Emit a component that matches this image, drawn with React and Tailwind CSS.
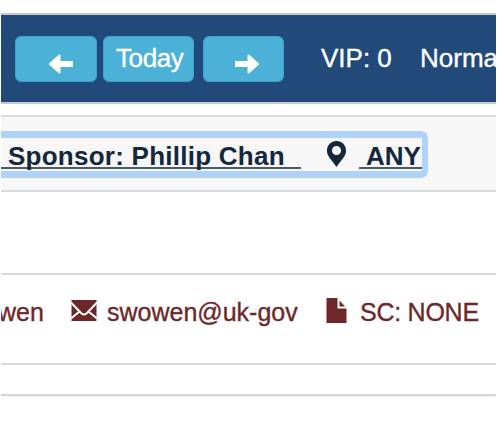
function Arrow({ flip }) {
  return (
    <svg width="26" height="20" viewBox="0 0 26 20" fill="white" className={flip ? "-scale-x-100" : ""}>
      <path d="M0.5 10 L11 0.5 L12.5 1 V7 H25 V13 H12.5 V19 L11 19.5 Z" />
    </svg>
  );
}

function Header() {
  return (
    <div className="ml-px mr-px h-[91px] border-t-2 border-b-2 border-[#c7c8c9] bg-[#214a7b]">
      <div className="flex h-[87px] items-start overflow-hidden pl-[14px] pt-[21px] text-[26px] leading-[46px] text-white [-webkit-text-stroke:0.35px_white]">
        <div className="h-[46px] w-[82px] shrink-0 rounded-[6px] border border-[#3fa0c8] bg-[#4cb1d7] pl-[32px] pt-[17px]">
          <Arrow />
        </div>
        <div className="ml-[6px] h-[46px] w-[91px] shrink-0 rounded-[6px] border border-[#3fa0c8] bg-[#4cb1d7] pl-[12px] leading-[43px] tracking-[-0.4px]">
          Today
        </div>
        <div className="ml-[9px] h-[46px] w-[81px] shrink-0 rounded-[6px] border border-[#3fa0c8] bg-[#4cb1d7] pl-[30px] pt-[17px]">
          <Arrow flip />
        </div>
        <span className="ml-[37px] w-[99px] shrink-0 whitespace-nowrap leading-[44px]">VIP: 0</span>
        <span className="shrink-0 leading-[44px]">Norma</span>
      </div>
    </div>
  );
}

function Sponsor() {
  return (
    <div className="mx-px mt-[11px] h-[77px] border-y-2 border-[#d9dada] bg-[#f7f7f7] pt-[14px]">
      <div className="flex h-[47px] w-[427px] items-start rounded-r-[7px] border-y-[7px] border-r-[6px] border-[#b0d2fa] text-[26px] font-bold leading-[36px] text-[#14273b]">
        <span className="h-[31px] w-[284px] shrink-0 whitespace-nowrap border-b-2 border-[#465b6e] pl-[7px] tracking-[0.25px]">
          Sponsor: Phillip Chan
        </span>
        <span className="h-[31px] w-[16px] shrink-0 border-b-2 border-[#465b6e]" />
        <svg className="ml-[25px] mt-[2px] shrink-0" width="21" height="28" viewBox="0 0 22 28">
          <path fillRule="evenodd" fill="#14273b" d="M11 0.5 C5.2 0.5 1 5 1 10.5 C1 16 5.5 19.5 11 27.5 C16.5 19.5 21 16 21 10.5 C21 5 16.8 0.5 11 0.5 Z M11 5.5 A4.8 4.8 0 1 1 11 15.1 A4.8 4.8 0 1 1 11 5.5 Z" />
        </svg>
        <span className="ml-[12px] h-[31px] w-[63px] shrink-0 whitespace-nowrap border-b-2 border-[#465b6e] pl-[7px]">
          ANY
        </span>
      </div>
    </div>
  );
}

function Contact() {
  return (
    <div className="mx-px mt-[81px] h-[92px] overflow-hidden border-t-2 border-b-2 border-[#d9d9d9]">
      <div className="flex items-start whitespace-nowrap pt-[22px] text-[25px] leading-[30px] text-[#6e2729] [-webkit-text-stroke:0.35px_#6e2729]">
        <span className="-ml-[3px] w-[73px] shrink-0">wen</span>
        <svg className="mt-[3px] shrink-0" width="26" height="21" viewBox="0 0 26 21">
          <path fill="#6e2729" d="M0.5 0 H25.5 V21 H0.5 Z" />
          <path fill="none" stroke="white" strokeWidth="2" d="M0 2.5 L10.5 13.5 Q13 15.5 15.5 13.5 L26 2.5 M0 18.5 L8.5 11.5 M26 18.5 L17.5 11.5" />
        </svg>
        <span className="ml-[10px] w-[219px] shrink-0">swowen@uk-gov</span>
        <svg className="mt-px shrink-0" width="21" height="25" viewBox="0 0 21 25" fill="#6e2729">
          <path d="M0.5 0 H11.5 V10.5 H20.5 V25 H0.5 Z" />
          <path d="M13.5 2.5 L19 8.5 H13.5 Z" />
        </svg>
        <span className="ml-[13px] shrink-0 tracking-[-0.25px]">SC: NONE</span>
      </div>
    </div>
  );
}

export default function App() {
  return (
    <div className="h-[422px] w-[497px] overflow-hidden bg-white pt-[13px] font-['Liberation_Sans',Arial,sans-serif]">
      <Header />
      <Sponsor />
      <Contact />
      <div className="mx-px mt-[29px] h-[2px] bg-[#d6d6d6] shadow-[0_1px_2px_rgba(0,0,0,0.08)]" />
    </div>
  );
}
